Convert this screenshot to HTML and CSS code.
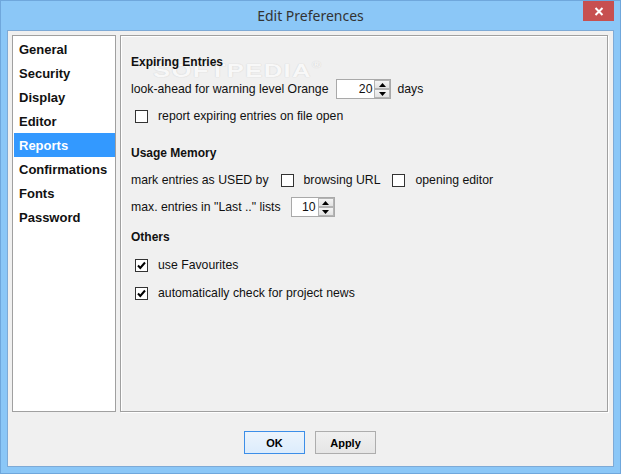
FILE: index.html
```html
<!DOCTYPE html>
<html>
<head>
<meta charset="utf-8">
<title>Edit Preferences</title>
<link rel="stylesheet" href="styles.css">
</head>
<body>
<div class="window">
  <div class="titlebar">
    <div></div>
    <div class="title">Edit Preferences</div>
    <div class="controls">
      <div class="close"><svg width="10" height="9" viewBox="0 0 10 9"><path d="M1.5 1L8.5 8M8.5 1L1.5 8" stroke="#fff" stroke-width="2"/></svg></div>
    </div>
  </div>
  <div class="client">
    <div class="main">
      <ul class="nav">
        <li>General</li>
        <li>Security</li>
        <li>Display</li>
        <li>Editor</li>
        <li class="active">Reports</li>
        <li>Confirmations</li>
        <li>Fonts</li>
        <li>Password</li>
      </ul>
      <div class="panel">
        <div class="watermark">SOFTPEDIA<span class="reg">®</span></div>
        <div class="heading">Expiring Entries</div>
        <div class="row">
          <span>look-ahead for warning level Orange</span>
          <div class="spin spin-wide">
            <span class="val">20</span>
            <span class="arrows">
              <span class="arrow"><svg width="7" height="4" viewBox="0 0 7 4"><path d="M0 4L3.5 0L7 4Z" fill="#000"/></svg></span>
              <span class="arrow"><svg width="7" height="4" viewBox="0 0 7 4"><path d="M0 0L3.5 4L7 0Z" fill="#000"/></svg></span>
            </span>
          </div>
          <span>days</span>
        </div>
        <div class="row">
          <span class="check"></span>
          <span>report expiring entries on file open</span>
        </div>

        <div class="heading sec">Usage Memory</div>
        <div class="row">
          <span>mark entries as USED by</span>
          <span class="check inline"></span>
          <span>browsing URL</span>
          <span class="check inline second"></span>
          <span>opening editor</span>
        </div>
        <div class="row">
          <span>max. entries in "Last .." lists</span>
          <div class="spin spin-narrow">
            <span class="val">10</span>
            <span class="arrows">
              <span class="arrow"><svg width="7" height="4" viewBox="0 0 7 4"><path d="M0 4L3.5 0L7 4Z" fill="#000"/></svg></span>
              <span class="arrow"><svg width="7" height="4" viewBox="0 0 7 4"><path d="M0 0L3.5 4L7 0Z" fill="#000"/></svg></span>
            </span>
          </div>
        </div>

        <div class="heading sec2">Others</div>
        <div class="row loose">
          <span class="check"><svg width="11" height="11" viewBox="0 0 11 11"><path d="M2 5.5L4.3 8L9 2.5" fill="none" stroke="#000" stroke-width="2"/></svg></span>
          <span>use Favourites</span>
        </div>
        <div class="row loose">
          <span class="check"><svg width="11" height="11" viewBox="0 0 11 11"><path d="M2 5.5L4.3 8L9 2.5" fill="none" stroke="#000" stroke-width="2"/></svg></span>
          <span>automatically check for project news</span>
        </div>
      </div>
    </div>
    <div class="buttons">
      <button class="btn default">OK</button>
      <button class="btn">Apply</button>
    </div>
  </div>
</div>
</body>
</html>
```

FILE: styles.css
```css
html, body {
  margin: 0;
  padding: 0;
}
body {
  width: 621px;
  height: 474px;
  overflow: hidden;
  font-family: "Liberation Sans", Arial, sans-serif;
  color: #111;
}
.window {
  box-sizing: border-box;
  width: 621px;
  height: 474px;
  background: #8bc7f7;
  border: 1px solid #6fa7dc;
  padding: 0 6px 6px 6px;
  display: flex;
  flex-direction: column;
}
.titlebar {
  height: 29px;
  flex: none;
  display: grid;
  grid-template-columns: 1fr auto 1fr;
  align-items: start;
}
.title {
  font-family: "Noto Sans", "Open Sans", sans-serif;
  font-size: 14px;
  color: #333;
  line-height: 29px;
}
.controls {
  display: flex;
  justify-content: flex-end;
}
.close {
  width: 31px;
  height: 20px;
  background: #c75050;
  display: flex;
  align-items: center;
  justify-content: center;
}
.client {
  flex: 1;
  box-sizing: border-box;
  background: #f0f0f0;
  border: 1px solid #7eaad6;
  display: flex;
  flex-direction: column;
  padding: 4px 5px 0 4px;
}
.main {
  display: flex;
  gap: 4px;
  height: 377px;
}
.nav {
  width: 104px;
  box-sizing: border-box;
  border: 1px solid #a0a0a0;
  background: #fff;
  margin: 0;
  padding: 1px 0 0 1px;
  list-style: none;
}
.nav li {
  height: 24px;
  line-height: 26px;
  overflow: hidden;
  padding-left: 5px;
  font-weight: bold;
  font-size: 13px;
  color: #111;
}
.nav li.active {
  background: #3399ff;
  color: #fff;
}
.panel {
  flex: 1;
  position: relative;
  box-sizing: border-box;
  border: 1px solid #a0a0a0;
  box-shadow: 1px 1px 0 #fff, inset 1px 1px 0 #fff;
  background: #f0f0f0;
  padding: 16px 10px 0 10px;
  display: flex;
  flex-direction: column;
}
.watermark {
  position: absolute;
  left: 32px;
  top: 24px;
  font-weight: bold;
  font-size: 19px;
  letter-spacing: 1px;
  color: #f8f8f8;
  text-shadow: 0 0 1px #d4d4d4, 0 0 1px #dddddd;
  white-space: nowrap;
  transform: scaleX(1.35);
  transform-origin: left top;
}
.watermark .reg {
  font-size: 9px;
  letter-spacing: 0;
  vertical-align: top;
  margin-left: 0;
}
.heading {
  position: relative;
  font-weight: bold;
  font-size: 12px;
  height: 20px;
  line-height: 21px;
}
.heading.sec {
  margin-top: 17px;
}
.heading.sec2 {
  margin-top: 10px;
}
.row {
  position: relative;
  display: flex;
  align-items: center;
  height: 20px;
  margin-top: 7px;
  font-size: 12.25px;
  white-space: nowrap;
}
.row.loose {
  margin-top: 8px;
}
.check {
  width: 13px;
  height: 13px;
  box-sizing: border-box;
  border: 1px solid #333;
  background: #fff;
  margin: 0 10px 0 4px;
  display: flex;
  align-items: center;
  justify-content: center;
  flex: none;
}
.check.inline {
  margin-left: 12px;
}
.check.second {
  margin-left: 12px;
}
.spin {
  display: flex;
  box-sizing: border-box;
  height: 20px;
  border: 1px solid #a9a9a9;
  background: #fff;
  flex: none;
}
.spin-wide {
  width: 55px;
  margin: 0 6px 0 8px;
}
.spin-narrow {
  width: 44px;
  margin: 0 0 0 10px;
}
.spin .val {
  flex: 1;
  text-align: right;
  padding-right: 2px;
  line-height: 19px;
  font-size: 12.25px;
}
.spin .arrows {
  width: 16px;
  display: flex;
  flex-direction: column;
}
.spin .arrow {
  flex: 1;
  box-sizing: border-box;
  border: 1px solid #b4b4b4;
  background: linear-gradient(#f4f4f4, #e2e2e2);
  display: flex;
  align-items: center;
  justify-content: center;
}
.buttons {
  display: flex;
  justify-content: center;
  gap: 10px;
  margin-top: 19px;
}
.btn {
  width: 61px;
  height: 23px;
  box-sizing: border-box;
  border: 1px solid #adadad;
  background: linear-gradient(#f0f0f0, #e5e5e5);
  font-family: "Liberation Sans", Arial, sans-serif;
  font-weight: bold;
  font-size: 11px;
  color: #000;
  padding: 0;
}
.btn.default {
  border-color: #3c8ee8;
  background: linear-gradient(#ecf4fc, #dcecfc);
}
```
